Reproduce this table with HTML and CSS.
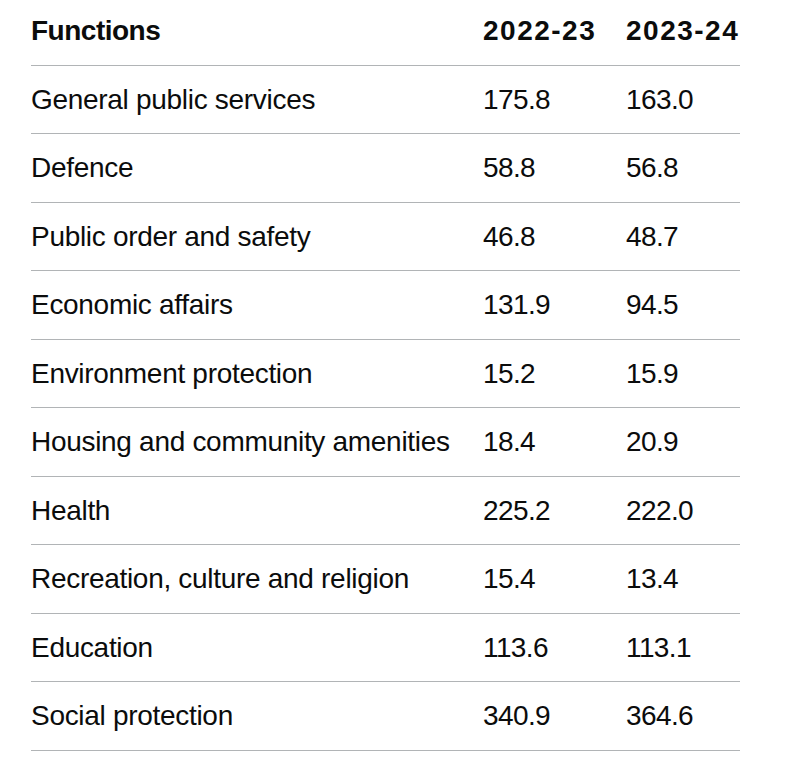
FILE: index.html
```html
<!DOCTYPE html>
<html lang="en">
<head>
<meta charset="utf-8">
<title>Functions</title>
<link rel="stylesheet" href="styles.css">
</head>
<body>
<main class="page">
  <table class="data-table">
    <colgroup>
      <col class="col-function">
      <col class="col-year">
      <col class="col-year-last">
    </colgroup>
    <thead>
      <tr>
        <th>Functions</th>
        <th class="year">2022-23</th>
        <th class="year">2023-24</th>
      </tr>
    </thead>
    <tbody>
      <tr><td>General public services</td><td class="num">175.8</td><td class="num">163.0</td></tr>
      <tr><td>Defence</td><td class="num">58.8</td><td class="num">56.8</td></tr>
      <tr><td>Public order and safety</td><td class="num">46.8</td><td class="num">48.7</td></tr>
      <tr><td>Economic affairs</td><td class="num">131.9</td><td class="num">94.5</td></tr>
      <tr><td>Environment protection</td><td class="num">15.2</td><td class="num">15.9</td></tr>
      <tr><td>Housing and community amenities</td><td class="num">18.4</td><td class="num">20.9</td></tr>
      <tr><td>Health</td><td class="num">225.2</td><td class="num">222.0</td></tr>
      <tr><td>Recreation, culture and religion</td><td class="num">15.4</td><td class="num">13.4</td></tr>
      <tr><td>Education</td><td class="num">113.6</td><td class="num">113.1</td></tr>
      <tr><td>Social protection</td><td class="num">340.9</td><td class="num">364.6</td></tr>
    </tbody>
  </table>
</main>
</body>
</html>
```

FILE: styles.css
```css
html, body {
  margin: 0;
  padding: 0;
  background: #ffffff;
}

.page {
  padding: 0 0 0 31px;
}

.data-table {
  width: 709px;
  table-layout: fixed;
  border-collapse: collapse;
  border-spacing: 0;
  font-family: "Liberation Sans", Arial, sans-serif;
  font-size: 28px;
  line-height: 37.5px;
  color: #0b0c0c;
}

.col-function { width: 452px; }
.col-year { width: 143px; }
.col-year-last { width: 114px; }

.data-table th,
.data-table td {
  padding: 15px 30px 15px 0;
  text-align: left;
  vertical-align: top;
  border-bottom: 1px solid #b1b4b6;
  white-space: nowrap;
  letter-spacing: -0.3px;
}

.data-table th:last-child,
.data-table td:last-child {
  padding-right: 0;
}

.data-table th {
  font-weight: 700;
  padding-top: 12px;
  letter-spacing: -0.5px;
}

.data-table th.year {
  letter-spacing: 1.5px;
}

.data-table td.num {
  letter-spacing: -0.6px;
}
```
